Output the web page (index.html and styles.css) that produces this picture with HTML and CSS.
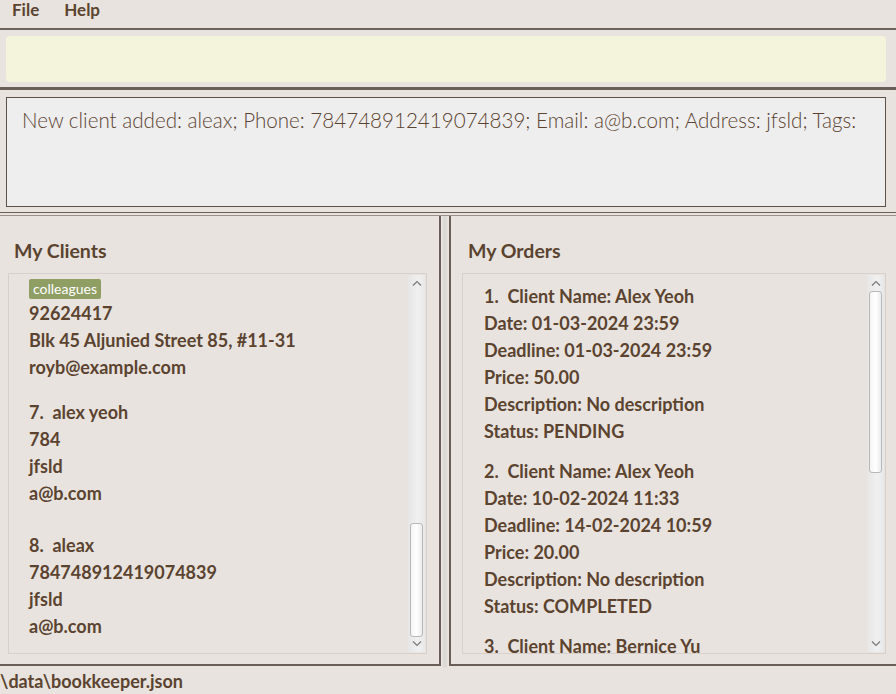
FILE: index.html
```html
<!DOCTYPE html>
<html>
<head>
<meta charset="utf-8">
<link rel="stylesheet" href="styles.css">
</head>
<body>
<div class="app">
  <div class="menubar">
    <span class="menu">File</span>
    <span class="menu">Help</span>
  </div>
  <div class="command">
    <div class="command-input"></div>
  </div>
  <div class="result">
    <div class="result-box">New client added: aleax; Phone: 784748912419074839; Email: a@b.com; Address: jfsld; Tags:</div>
  </div>
  <div class="panels">
    <div class="panel left">
      <div class="panel-title">My Clients</div>
      <div class="listbox">
        <div class="list-content">
          <div class="card">
            <div class="tags"><span class="tag">colleagues</span></div>
            <div class="line">92624417</div>
            <div class="line">Blk 45 Aljunied Street 85, #11-31</div>
            <div class="line">royb@example.com</div>
          </div>
          <div class="card c7">
            <div class="line">7.&nbsp;&nbsp;alex yeoh</div>
            <div class="line">784</div>
            <div class="line">jfsld</div>
            <div class="line">a@b.com</div>
          </div>
          <div class="card c8">
            <div class="line">8.&nbsp;&nbsp;aleax</div>
            <div class="line">784748912419074839</div>
            <div class="line">jfsld</div>
            <div class="line">a@b.com</div>
          </div>
        </div>
        <div class="scrollbar">
          <div class="arrow up"><svg width="10" height="6" viewBox="0 0 10 6"><path d="M1 5.5 L5 1.5 L9 5.5" fill="none" stroke="#7a7a7a" stroke-width="1.2"/></svg></div>
          <div class="track"><div class="thumb thumb-left"></div></div>
          <div class="arrow down"><svg width="10" height="6" viewBox="0 0 10 6"><path d="M1 0.5 L5 4.5 L9 0.5" fill="none" stroke="#7a7a7a" stroke-width="1.2"/></svg></div>
        </div>
      </div>
    </div>
    <div class="divider"></div>
    <div class="panel right">
      <div class="panel-title">My Orders</div>
      <div class="listbox">
        <div class="list-content orders">
          <div class="order">
            <div class="line">1.&nbsp;&nbsp;Client Name: Alex Yeoh</div>
            <div class="line">Date: 01-03-2024 23:59</div>
            <div class="line">Deadline: 01-03-2024 23:59</div>
            <div class="line">Price: 50.00</div>
            <div class="line">Description: No description</div>
            <div class="line">Status: PENDING</div>
          </div>
          <div class="order">
            <div class="line">2.&nbsp;&nbsp;Client Name: Alex Yeoh</div>
            <div class="line">Date: 10-02-2024 11:33</div>
            <div class="line">Deadline: 14-02-2024 10:59</div>
            <div class="line">Price: 20.00</div>
            <div class="line">Description: No description</div>
            <div class="line">Status: COMPLETED</div>
          </div>
          <div class="order">
            <div class="line">3.&nbsp;&nbsp;Client Name: Bernice Yu</div>
          </div>
        </div>
        <div class="scrollbar">
          <div class="arrow up"><svg width="10" height="6" viewBox="0 0 10 6"><path d="M1 5.5 L5 1.5 L9 5.5" fill="none" stroke="#7a7a7a" stroke-width="1.2"/></svg></div>
          <div class="track"><div class="thumb thumb-right"></div></div>
          <div class="arrow down"><svg width="10" height="6" viewBox="0 0 10 6"><path d="M1 0.5 L5 4.5 L9 0.5" fill="none" stroke="#7a7a7a" stroke-width="1.2"/></svg></div>
        </div>
      </div>
    </div>
  </div>
  <div class="statusbar"><span class="status-text">\data\bookkeeper.json</span></div>
</div>
</body>
</html>
```
FILE: styles.css
```css
* { box-sizing: border-box; }
html, body {
  margin: 0;
  padding: 0;
  width: 896px;
  height: 694px;
  overflow: hidden;
  background: #e8e3de;
  font-family: Lato, "Open Sans", sans-serif;
  color: #5b4330;
}
.app {
  display: flex;
  flex-direction: column;
  width: 896px;
  height: 694px;
}
.menubar {
  height: 30px;
  display: flex;
  align-items: flex-start;
  padding: 0 0 0 12px;
  gap: 25px;
  border-bottom: 2px solid #6e635b;
}
.menu {
  font-size: 17px;
  font-weight: 700;
  line-height: 20px;
}
.command {
  height: 60px;
  padding: 6px 10px 0 6px;
  border-bottom: 3px solid #6a5f58;
}
.command-input {
  height: 46px;
  background: #f4f4dc;
  border-radius: 4px;
}
.result {
  height: 123px;
  padding: 7px 10px 0 6px;
  border-bottom: 1px solid #6a5f58;
}
.result-box {
  height: 110px;
  border: 1px solid #5e5048;
  background: #eeeeee;
  padding: 8px 15px;
  font-size: 20.6px;
  font-weight: 300;
  line-height: 28px;
  color: #5b4330;
  white-space: nowrap;
  overflow: hidden;
}
.panels {
  height: 452px;
  display: flex;
  border-top: 1px solid #9a918a;
  margin-top: 2px;
}
.panel {
  height: 450px;
  border-bottom: 2px solid #6a5f58;
  display: flex;
  flex-direction: column;
}
.panel.left {
  width: 441px;
  border-right: 2px solid #6a5f58;
  padding: 0 12px 0 8px;
}
.panel.right {
  width: 447px;
  border-left: 2px solid #6a5f58;
  padding: 0 10px 0 11px;
}
.divider {
  width: 8px;
  background: linear-gradient(to right, #ebe7e3, #d9d5d1 50%, #ebe7e3);
}
.panel-title {
  height: 57px;
  padding-top: 23px;
  padding-left: 6px;
  font-size: 19.5px;
  font-weight: 700;
  line-height: 24px;
}
.listbox {
  height: 381px;
  border: 1px solid #d6d1cc;
  display: flex;
  overflow: hidden;
}
.list-content {
  flex: 1;
  overflow: hidden;
  padding: 4px 0 0 20px;
  font-size: 18px;
  font-weight: 700;
}
.line {
  height: 27px;
  line-height: 27px;
  white-space: nowrap;
}
.tags {
  height: 22px;
  display: flex;
  align-items: center;
}
.tag {
  background: #8f9e63;
  color: #ffffff;
  font-size: 14px;
  font-weight: 400;
  padding: 1px 4px 2px;
  border-radius: 2px;
  line-height: 17px;
}
.card.c7 { margin-top: 18px; }
.card.c8 { margin-top: 25px; }
.orders { padding-left: 21px; padding-top: 9px; }
.order { margin-bottom: 13px; }
.scrollbar {
  width: 17px;
  margin: 1px 1px 1px 0;
  background: linear-gradient(to right, #e6e6e6, #f0f0f0 60%, #e8e8e8);
  display: flex;
  flex-direction: column;
}
.arrow {
  height: 16px;
  display: flex;
  align-items: center;
  justify-content: center;
}
.track {
  flex: 1;
  position: relative;
}
.thumb {
  position: absolute;
  left: 2px;
  right: 2px;
  border: 1px solid #b8b8b8;
  border-radius: 3px;
  background: linear-gradient(to right, #f4f4f4, #ffffff 50%, #ececec);
}
.thumb-left { top: 232px; height: 114px; }
.thumb-right { top: 0px; height: 182px; }
.statusbar {
  flex: 1;
  display: flex;
  align-items: center;
  overflow: hidden;
}
.status-text {
  font-size: 18px;
  font-weight: 700;
  white-space: nowrap;
}
```
